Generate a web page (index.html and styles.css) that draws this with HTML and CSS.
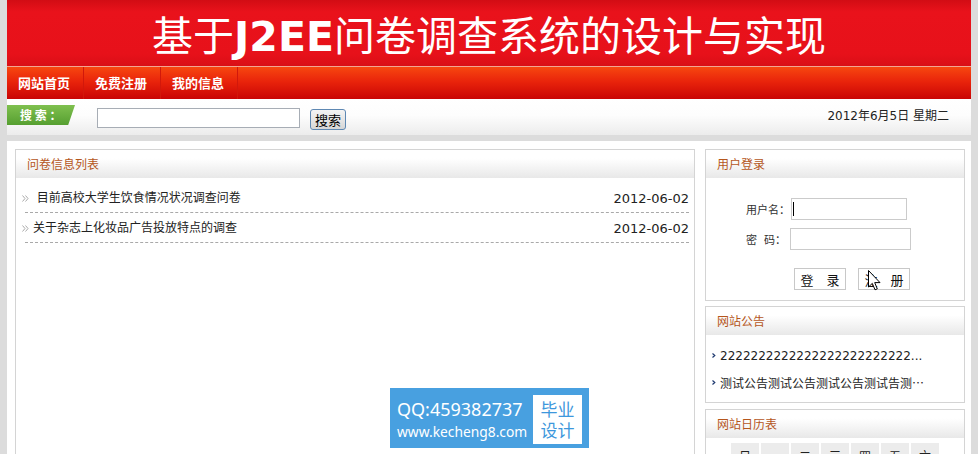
FILE: index.html
```html
<!DOCTYPE html>
<html lang="zh-CN">
<head>
  <meta charset="UTF-8">
  <title>基于J2EE问卷调查系统的设计与实现</title>
  <link rel="stylesheet" href="styles.css">
</head>
<body>
  <div class="page">
    <div class="banner">
      <h1>基于<b>J2EE</b>问卷调查系统的设计与实现</h1>
    </div>

    <ul class="nav">
      <li><a href="#">网站首页</a></li>
      <li><a href="#">免费注册</a></li>
      <li><a href="#">我的信息</a></li>
    </ul>

    <div class="searchbar">
      <span class="search-tab">搜 索 ：</span>
      <input type="text" class="search-input">
      <button class="search-btn">搜索</button>
      <span class="today">2012年6月5日 星期二</span>
    </div>

    <div class="main">
      <div class="panel list-panel">
        <h3>问卷信息列表</h3>
        <ul class="qlist">
          <li>
            <span class="qtitle"><svg class="dot" width="7" height="7" viewBox="0 0 7 7"><path d="M0.5 0.5 L3 3.5 L0.5 6.5 M3.5 0.5 L6 3.5 L3.5 6.5" fill="none" stroke="#aaa" stroke-width="1"/></svg>&nbsp;目前高校大学生饮食情况状况调查问卷</span>
            <span class="qdate">2012-06-02</span>
          </li>
          <li>
            <span class="qtitle"><svg class="dot" width="7" height="7" viewBox="0 0 7 7"><path d="M0.5 0.5 L3 3.5 L0.5 6.5 M3.5 0.5 L6 3.5 L3.5 6.5" fill="none" stroke="#aaa" stroke-width="1"/></svg>关于杂志上化妆品广告投放特点的调查</span>
            <span class="qdate">2012-06-02</span>
          </li>
        </ul>
      </div>

      <div class="side">
        <div class="panel">
          <h3>用户登录</h3>
          <form class="login">
            <div class="field">
              <label>用户名：</label>
              <span class="input-wrap">
                <input type="text" class="name-input">
                <span class="caret"></span>
              </span>
            </div>
            <div class="field">
              <label>密&nbsp;&nbsp;码：</label>
              <input type="password" class="pass-input">
            </div>
            <div class="login-btns">
              <button type="button">登　录</button>
              <button type="button">注　册</button>
            </div>
          </form>
        </div>

        <div class="panel notice">
          <h3>网站公告</h3>
          <ul>
            <li><svg class="arrow" width="4" height="5" viewBox="0 0 4 5"><path d="M0.5 0.5 L2.8 2.5 L0.5 4.5" fill="none" stroke="#1f3a70" stroke-width="1.2"/></svg>2222222222222222222222222...</li>
            <li><svg class="arrow" width="4" height="5" viewBox="0 0 4 5"><path d="M0.5 0.5 L2.8 2.5 L0.5 4.5" fill="none" stroke="#1f3a70" stroke-width="1.2"/></svg>测试公告测试公告测试公告测试告测<span class="cjk">…</span></li>
          </ul>
        </div>

        <div class="panel">
          <h3>网站日历表</h3>
          <table class="calendar">
            <tr><th>日</th><th>一</th><th>二</th><th>三</th><th>四</th><th>五</th><th>六</th></tr>
            <tr><td></td><td></td><td></td><td></td><td></td><td>1</td><td>2</td></tr>
            <tr><td>3</td><td>4</td><td>5</td><td>6</td><td>7</td><td>8</td><td>9</td></tr>
          </table>
        </div>
      </div>
    </div>
  </div>

  <div class="watermark">
    <div class="wm-text">
      <div class="wm-qq">QQ:459382737</div>
      <div class="wm-url">www.kecheng8.com</div>
    </div>
    <div class="wm-box">毕业<br>设计</div>
  </div>

  <svg class="cursor" width="13" height="21" viewBox="0 0 13 21">
    <path d="M0.5 0.5 L0.5 17 L4.3 13.4 L7 19.8 L9.3 18.8 L6.7 12.6 L12 12.6 Z" fill="#fff" stroke="#000" stroke-width="1"/>
  </svg>
</body>
</html>
```

FILE: styles.css
```css
body {
  margin: 0;
  background-color: #dcdcdc;
  font-family: "DejaVu Sans", "Noto Sans CJK SC", sans-serif;
  font-size: 12px;
  color: #222;
}

.page {
  width: 964px;
  min-height: 454px;
  margin: 0 auto;
  background-color: #fff;
}

/* banner */
.banner {
  height: 66px;
  background: linear-gradient(#d20c14, #e9121b 18%, #e7111a 82%, #d90e16);
  border-bottom: 1px solid #f3a592;
  text-align: center;
}

.banner h1 {
  margin: 0;
  font: normal 41px/66px "Noto Sans CJK SC", sans-serif;
  letter-spacing: 0;
  color: #fff;
}

.banner b {
  font-family: "DejaVu Sans", sans-serif;
  font-weight: bold;
}

/* nav */
.nav {
  display: flex;
  margin: 0;
  padding: 0;
  list-style: none;
  height: 32px;
  background: linear-gradient(#f7470f, #e9240b 45%, #c90505);
}

.nav a {
  display: block;
  padding: 0 13px 0 11px;
  line-height: 32px;
  font-family: "Noto Sans CJK SC", sans-serif;
  font-size: 13px;
  font-weight: bold;
  color: #fff;
  text-decoration: none;
  border-right: 1px solid #d2180b;
}

/* search bar */
.searchbar {
  display: flex;
  align-items: flex-start;
  height: 36px;
  background: linear-gradient(#fff, #fdfdfd 45%, #ececec);
  border-bottom: 6px solid #dcdcdc;
}

.search-tab {
  margin-top: 6px;
  width: 68px;
  height: 20px;
  line-height: 20px;
  padding-left: 13px;
  box-sizing: border-box;
  background: linear-gradient(#7fc04f, #569f31);
  color: #fff;
  font-family: "Noto Sans CJK SC", sans-serif;
  font-weight: bold;
  clip-path: polygon(0 0, 100% 0, 90% 100%, 0 100%);
}

.search-input {
  margin: 9px 0 0 22px;
  width: 203px;
  height: 20px;
  box-sizing: border-box;
  border: 1px solid #a7adb5;
  padding: 0;
}

.search-btn {
  margin: 10px 0 0 10px;
  width: 36px;
  height: 21px;
  box-sizing: border-box;
  padding: 0;
  border: 1px solid #5e88b3;
  border-radius: 3px;
  background: linear-gradient(#f4f4f4, #e6e6e6 50%, #d6d6d6);
  font-family: "Noto Sans CJK SC", sans-serif;
  font-size: 13px;
  line-height: 17px;
  color: #000;
}

.today {
  margin: 7px 0 0 auto;
  padding-right: 22px;
  line-height: 20px;
  color: #222;
}

/* main */
.main {
  display: flex;
  align-items: flex-start;
  gap: 10px;
  padding: 8px 6px 0 8px;
}

.panel {
  border: 1px solid #d4d4d4;
  background-color: #fff;
}

.panel h3 {
  margin: 0;
  height: 28px;
  line-height: 28px;
  padding-left: 11px;
  font-size: 12px;
  font-weight: normal;
  color: #b5561c;
  font-family: "Noto Sans CJK SC", sans-serif;
  background: linear-gradient(#fff, #fff 30%, #e8e8e8);
}

.list-panel {
  width: 680px;
  height: 320px;
  box-sizing: border-box;
}

.qlist {
  list-style: none;
  margin: 5px 5px 0 9px;
  padding: 0;
}

.qlist li {
  display: flex;
  justify-content: space-between;
  height: 27px;
  padding-top: 2px;
  line-height: 27px;
  border-bottom: 1px dashed #a9a9a9;
}

.qtitle {
  display: flex;
  align-items: center;
  margin-left: -3px;
}

.dot {
  margin-right: 4px;
}

.qdate {
  font-size: 13px;
}

/* side */
.side {
  width: 260px;
}

.side .panel + .panel {
  margin-top: 5px;
}

.side .panel:last-child {
  margin-top: 6px;
}

.login {
  margin: 0;
  padding: 20px 0 10px 40px;
}

.field {
  display: flex;
  align-items: center;
  height: 22px;
  margin-bottom: 8px;
}

.field label {
  width: 45px;
  font-size: 11px;
  color: #333;
}

.field input {
  height: 22px;
  box-sizing: border-box;
  padding: 0;
  border: 1px solid #cbcbcb;
}

.input-wrap {
  position: relative;
  display: flex;
}

.name-input {
  width: 116px;
}

.pass-input {
  width: 121px;
  margin-left: -1px;
}

.caret {
  position: absolute;
  left: 2px;
  top: 4px;
  width: 1px;
  height: 14px;
  background-color: #000;
}

.login-btns {
  display: flex;
  gap: 12px;
  padding-left: 48px;
  margin-top: 18px;
}

.login-btns button {
  width: 52px;
  height: 22px;
  padding: 0;
  border: 1px solid #c8c8c8;
  background-color: #fff;
  font-family: "Noto Sans CJK SC", sans-serif;
  font-size: 13px;
  color: #111;
}

.notice ul {
  list-style: none;
  margin: 0;
  padding: 7px 0 6px 6px;
}

.notice li {
  display: flex;
  align-items: center;
  height: 27px;
  white-space: nowrap;
  overflow: hidden;
}

.arrow {
  margin-right: 4px;
}

.cjk {
  font-family: "Noto Sans CJK SC", sans-serif;
}

.calendar {
  margin: 3px auto 0;
  border-spacing: 2px;
}

.calendar th,
.calendar td {
  width: 28px;
  height: 24px;
  padding: 0;
  background-color: #ececec;
  text-align: center;
  font-weight: normal;
  font-size: 12px;
}

/* overlays */
.watermark {
  position: absolute;
  left: 390px;
  top: 388px;
  width: 199px;
  height: 60px;
  display: flex;
  background-color: #48a0e0;
  color: #fff;
  font-family: "Noto Sans", sans-serif;
}

.wm-text {
  width: 140px;
  margin-right: 3px;
  padding-left: 7px;
  box-sizing: border-box;
}

.wm-qq {
  margin-top: 10px;
  font-size: 18px;
  line-height: 22px;
}

.wm-url {
  margin-top: 2px;
  font-size: 13.8px;
  line-height: 20px;
}

.wm-box {
  margin-top: 7px;
  width: 49px;
  height: 49px;
  background-color: #fff;
  color: #3d97dc;
  font-family: "Noto Sans CJK SC", sans-serif;
  font-size: 17px;
  line-height: 21px;
  text-align: center;
  padding-top: 3px;
  box-sizing: border-box;
}

.cursor {
  position: absolute;
  left: 868px;
  top: 270px;
}
```
